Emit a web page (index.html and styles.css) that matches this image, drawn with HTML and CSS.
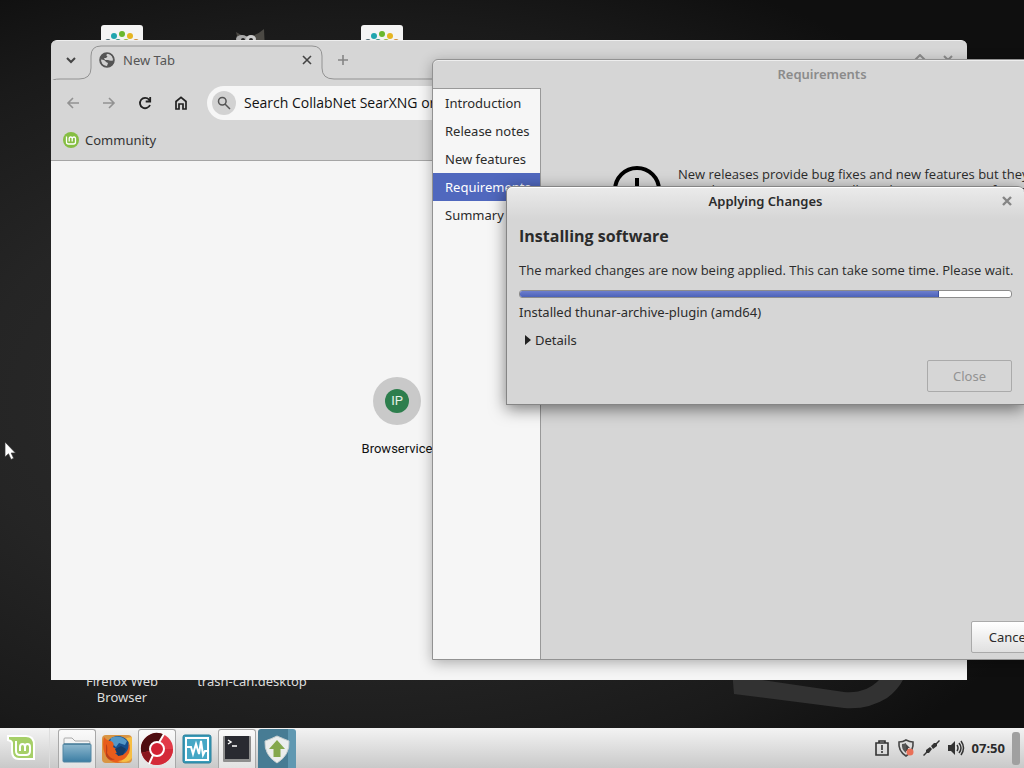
FILE: index.html
```html
<!DOCTYPE html>
<html lang="en">
<head>
    <meta charset="UTF-8">
    <meta name="viewport" content="width=device-width, initial-scale=1.0">
    <title>Desktop</title>
    <link rel="stylesheet" href="styles.css">
</head>
<body>
    <main class="desktop">
        <!-- Wallpaper logo -->
        <svg class="wallpaper-logo" width="176" height="50" viewBox="0 0 176 50">
            <path d="M0 0L2 24L112 38Q136 40 155 28Q166 20 172 8L176 0H150L148 9Q134 24 112 22L30 10V0Z" fill="#323232"/>
        </svg>

        <!-- Desktop icons -->
        <div class="desktop-icon icon-collab-1">
            <svg width="42" height="42" viewBox="0 0 42 42">
                <rect width="42" height="42" rx="3" fill="#f4f4f4"/>
                <circle cx="13" cy="11" r="3" fill="#20a5ae"/><circle cx="21" cy="9" r="3" fill="#69b82d"/><circle cx="29" cy="11" r="3" fill="#e5b522"/>
                <circle cx="7" cy="17" r="3" fill="#44616c"/><circle cx="17" cy="17" r="3" fill="#328c80"/><circle cx="25" cy="17" r="3" fill="#92b435"/><circle cx="35" cy="17" r="3" fill="#d28a35"/>
            </svg>
        </div>
        <div class="desktop-icon icon-gimp">
            <svg width="42" height="42" viewBox="0 0 42 42">
                <path d="M5 7L14 12Q24 12 33 4L34 26H3V15L7 15Z" fill="#4b4944"/>
                <ellipse cx="11" cy="14" rx="6" ry="4" fill="#a9a9a9"/><ellipse cx="20" cy="14" rx="5" ry="4" fill="#ccc"/>
                <circle cx="12" cy="15" r="2" fill="#222"/><circle cx="20" cy="15" r="2" fill="#222"/>
            </svg>
        </div>
        <div class="desktop-icon icon-collab-2">
            <svg width="42" height="42" viewBox="0 0 42 42">
                <rect width="42" height="42" rx="3" fill="#f4f4f4"/>
                <circle cx="13" cy="11" r="3" fill="#20a5ae"/><circle cx="21" cy="9" r="3" fill="#69b82d"/><circle cx="29" cy="11" r="3" fill="#e5b522"/>
                <circle cx="7" cy="17" r="3" fill="#44616c"/><circle cx="17" cy="17" r="3" fill="#328c80"/><circle cx="25" cy="17" r="3" fill="#92b435"/><circle cx="35" cy="17" r="3" fill="#d28a35"/>
            </svg>
        </div>
        <div class="desktop-icon icon-firefox">Firefox Web<br>Browser</div>
        <div class="desktop-icon icon-trash">trash-can.desktop</div>

        <!-- Browser window -->
        <section class="window browser">
            <div class="tab-strip">
                <svg class="tab-outline" width="916" height="40" viewBox="0 0 916 40" fill="none" stroke="#929292">
                    <path d="M0 42Q1 39 9 39H28Q40 39 40 28V16Q40 6 50 6H261Q271 6 271 16V28Q271 39 283 39H916"/>
                </svg>
                <button class="tab-search" aria-label="Search tabs">
                    <svg width="12" height="12" viewBox="0 0 12 12" fill="none" stroke="#444" stroke-width="2"><path d="M2 4L6 8L10 4"/></svg>
                </button>
                <div class="tab">
                    <svg width="16" height="16" viewBox="0 0 16 16">
                        <circle cx="8" cy="8" r="7" fill="#555"/>
                        <path d="M9 1.5Q6 3 8.500 4.500L7 6H5L6 8H9Q11 9 14 8.500Q14 3 9 1.500ZM2 7.500Q6 7.500 7 10L9 11L8 14Q2 14 2 7.500Z" fill="#d0d0d0"/>
                        <circle cx="8" cy="8" r="7" fill="none" stroke="#555" stroke-width="1.6"/>
                    </svg>
                    <span class="tab-title">New Tab</span>
                    <button aria-label="Close tab"><svg width="10" height="10" viewBox="0 0 10 10" stroke="#444" stroke-width="1.6"><path d="M1 1L9 9M9 1L1 9"/></svg></button>
                </div>
                <button class="new-tab" aria-label="New tab"><svg width="12" height="12" viewBox="0 0 12 12" stroke="#858585" stroke-width="1.6"><path d="M6 1V11M1 6H11"/></svg></button>
                <div class="window-controls">
                    <svg width="70" height="12" viewBox="0 0 70 12" fill="none" stroke="#8d8d8d" stroke-width="2"><path d="M0 6H10M28 6L33 1L38 6M57 2L65 10M65 2L57 10"/></svg>
                </div>
            </div>
            <div class="toolbar">
                <button aria-label="Back"><svg width="16" height="16" viewBox="0 0 16 16" fill="none" stroke="#929292" stroke-width="1.6"><path d="M14 8H3M8 3L3 8L8 13"/></svg></button>
                <button aria-label="Forward"><svg width="16" height="16" viewBox="0 0 16 16" fill="none" stroke="#929292" stroke-width="1.6"><path d="M2 8H13M8 3L13 8L8 13"/></svg></button>
                <button aria-label="Reload"><svg width="16" height="16" viewBox="0 0 16 16" fill="none" stroke="#222" stroke-width="1.8"><path d="M13 10A5.2 5.2 0 1 1 12 4.5L13 6M13.2 2V6.5H8.7"/></svg></button>
                <button aria-label="Home"><svg width="16" height="16" viewBox="0 0 16 16" fill="none" stroke="#222" stroke-width="1.7"><path d="M3 6.5L8 2.4L13 6.5V14H10V9H6V14H3Z"/></svg></button>
                <label class="omnibox">
                    <span class="search-badge"><svg width="14" height="14" viewBox="0 0 14 14" fill="none" stroke="#555" stroke-width="1.5"><circle cx="5.3" cy="5.3" r="3.8"/><path d="M8 8L13 13"/></svg></span>
                    <input type="text" aria-label="Address" placeholder="Search CollabNet SearXNG or type a URL">
                </label>
            </div>
            <div class="bookmarks">
                <svg width="16" height="16" viewBox="0 0 16 16">
                    <circle cx="8" cy="8" r="8" fill="#86be43"/>
                    <path d="M3.5 4.5V10Q3.5 12 5.5 12H10.5Q12.5 12 12.5 10V6.5Q12.5 5 11 5T9.2 6.5V9.5M9.2 9.5V6.5Q9.2 5 7.7 5T6.2 6.5V9.5" fill="none" stroke="#fff" stroke-width="1.3"/>
                </svg>
                <a href="#">Community</a>
            </div>
            <div class="page">
                <a class="shortcut" href="#">
                    <span class="shortcut-circle"><span class="shortcut-logo">IP</span></span>
                    <span>Browservice</span>
                </a>
            </div>
        </section>

        <!-- Upgrade assistant -->
        <section class="window upgrade">
            <h2 class="window-title">Requirements</h2>
            <div class="upgrade-body">
                <ul class="steps">
                    <li>Introduction</li>
                    <li>Release notes</li>
                    <li>New features</li>
                    <li class="active">Requirements</li>
                    <li>Summary</li>
                </ul>
                <div class="upgrade-content">
                    <div class="notice">
                        <svg width="48" height="48" viewBox="0 0 48 48"><circle cx="24" cy="24" r="22" fill="none" stroke="#000" stroke-width="4"/><path d="M24 12V28M24 32V36" stroke="#000" stroke-width="4"/></svg>
                        <p>New releases provide bug fixes and new features but they<br>introduce new issues. You will need some amount of time</p>
                    </div>
                    <div class="upgrade-actions"><button class="gtk-button cancel">Cancel</button></div>
                </div>
            </div>
        </section>

        <!-- Progress dialog -->
        <section class="window dialog">
            <header class="dialog-header">
                <h2 class="window-title">Applying Changes</h2>
                <button class="dialog-close" aria-label="Close window"><svg width="10" height="10" viewBox="0 0 10 10" stroke="#858585" stroke-width="2.4"><path d="M1 1L9 9M9 1L1 9"/></svg></button>
            </header>
            <div class="dialog-body">
                <h1>Installing software</h1>
                <p class="message">The marked changes are now being applied. This can take some time. Please wait.</p>
                <div class="progress"><div class="progress-value" style="width: 85.2%"></div></div>
                <p class="status">Installed thunar-archive-plugin (amd64)</p>
                <details><summary><svg width="6" height="10" viewBox="0 0 6 10"><path d="M0 0L6 5L0 10Z" fill="#222"/></svg>Details</summary></details>
                <div class="dialog-actions"><button class="gtk-button" disabled>Close</button></div>
            </div>
        </section>

        <svg class="cursor" width="12" height="20" viewBox="0 0 12 20"><path d="M1 1V16L4.5 12.8L7 18.5L9.7 17.3L7.2 12H11.5Z" fill="#fff" stroke="#333" stroke-width=".7"/></svg>
    </main>

    <footer class="panel">
        <button class="menu-button" aria-label="Menu">
            <svg width="30" height="28" viewBox="0 0 30 28">
                <path d="M2 2H20Q28 2 28 11V25H13Q6 25 6 17V9Q6 7 2 6Z" fill="#a6cf68" stroke="#fff" stroke-width="2"/>
                <path d="M10 7V17Q10 21 14 21H20Q24 21 24 17V13Q24 10 21.5 10T19 13V17M19 17V13Q19 10 16.5 10T14 13V17" fill="none" stroke="#fff" stroke-width="2"/>
            </svg>
        </button>
        <div class="tasks">
            <button class="task open" aria-label="Files">
                <svg width="32" height="32" viewBox="0 0 32 32">
                    <defs><linearGradient id="folder" x2="0" y2="1"><stop stop-color="#8fb9cf"/><stop offset="1" stop-color="#3b7da3"/></linearGradient></defs>
                    <path d="M3 6Q3 5 4 5H11L14 8H28Q29 8 29 10V14H3Z" fill="#f5f5f5" stroke="#aaa"/>
                    <rect x="2" y="11" width="28" height="18" rx="1" fill="url(#folder)" stroke="#5386a2"/>
                    <path d="M3 11H29" stroke="#366e8d"/>
                </svg>
            </button>
            <button class="task" aria-label="Firefox">
                <svg width="32" height="32" viewBox="0 0 32 32">
                    <rect x="1" y="2" width="30" height="28" rx="4" fill="#d99543"/>
                    <circle cx="17" cy="15" r="12" fill="#164e8d"/>
                    <path d="M10 5Q19 1 26 8L24 12L18 10L15 14L9 9Z" fill="#5598c7"/>
                    <path d="M3 4Q6 8 10 8Q14 10 12 14L17 17Q19 20 14 20Q17 24 23 21Q29 17 27 9Q34 20 26 27Q16 33 7 26Q0 17 3 4Z" fill="#e85c1b"/>
                    <path d="M25 5Q31 12 28 20Q23 29 16 28Q27 31 31 25V4Z" fill="#f6be43"/>
                    <path d="M5 11Q7 13 6 20Q9 26 14 26Q9 29 5 23Z" fill="#b9401b"/>
                    <path d="M14 16L20 13L25 16L22 22L17 23" fill="#153b66"/>
                </svg>
            </button>
            <button class="task open" aria-label="Chromium">
                <svg width="34" height="34" viewBox="0 0 34 34">
                    <circle cx="17" cy="17" r="16" fill="#e23b48"/>
                    <path d="M24 2.600A16 16 0 0 0 1.500 21L17 17Z" fill="#4e0d10"/>
                    <path d="M1.500 21A16 16 0 0 0 10 31.400L17 17Z" fill="#8a161d"/>
                    <path d="M10 31.400A16 16 0 0 0 33 17H17Z" fill="#d42a38"/>
                    <path d="M24 2L17 14M14 21L9 32" stroke="#fff" stroke-width="2"/>
                    <circle cx="17" cy="17" r="7" fill="#d32334" stroke="#fff" stroke-width="2"/>
                </svg>
            </button>
            <button class="task" aria-label="System monitor">
                <svg width="32" height="32" viewBox="0 0 32 32">
                    <rect x="2" y="2" width="28" height="28" rx="2" fill="#399bb9" stroke="#297e9a"/>
                    <rect x="5" y="5" width="22" height="22" fill="#45a7c5" stroke="#fff" stroke-width="2"/>
                    <path d="M6 14H10L12 21L15 11L18 21L20 8L22 22L24 18H27" fill="none" stroke="#fff" stroke-width="2"/>
                </svg>
            </button>
            <button class="task open" aria-label="Terminal">
                <svg width="32" height="32" viewBox="0 0 32 32">
                    <rect x="2" y="3" width="28" height="26" rx="1" fill="#8e8e8e"/>
                    <rect x="4" y="3" width="24" height="23" fill="#292a31"/>
                    <path d="M7 7L10 9L7 11M11 13H16" fill="none" stroke="#fff" stroke-width="1.5"/>
                </svg>
            </button>
            <button class="task current" aria-label="Update manager">
                <svg width="32" height="32" viewBox="0 0 32 32">
                    <path d="M16 3Q23 6 28 8Q29 22 16 30Q3 22 4 8Q10 6 16 3Z" fill="#eceeed" stroke="#c6cecf"/>
                    <path d="M16 7L24 16H19.5V24H12.5V16H8Z" fill="#85a84d"/>
                </svg>
            </button>
        </div>
        <div class="tray">
            <svg width="16" height="18" viewBox="0 0 16 18" fill="none" stroke="#333" stroke-width="1.600"><path d="M2 4H14V16H2ZM5 2H11V4H5ZM8 6V11M8 12V14"/></svg>
            <svg width="18" height="18" viewBox="0 0 18 18">
                <path d="M9 1Q13 3 16 3Q17 12 9 17Q1 12 2 3Q6 3 9 1Z" fill="#ddd" stroke="#444" stroke-width="1.6"/>
                <path d="M9 4V14Q4 10 5 5Q7 5 9 4Z" fill="#555"/>
                <path d="M9 5L13 9H11V12H9Z" fill="#444"/>
                <circle cx="13" cy="13" r="3.5" fill="#e97058"/>
            </svg>
            <svg width="18" height="18" viewBox="0 0 18 18"><path d="M1 16L4 13L4 11L8 8L10 10L7 14L5 14L2 17ZM9 7L12 4L14 4L17 1L18 2L15 5L15 7L11 10Z" fill="#333"/></svg>
            <svg width="18" height="18" viewBox="0 0 18 18"><path d="M1 6H4L8 2V16L4 12H1Z" fill="#333"/><path d="M10 6Q12 9 10 12M12 4Q16 9 12 14M14 2Q19 9 14 16" fill="none" stroke="#333" stroke-width="1.5"/></svg>
            <time class="clock">07:50</time>
            <button class="show-desktop" aria-label="Show desktop"></button>
        </div>
    </footer>
</body>
</html>
```
FILE: styles.css
```css
* {
    box-sizing: border-box;
}
body {
    margin: 0;
    height: 100vh;
    display: flex;
    flex-direction: column;
    overflow: hidden;
    background: #161616;
    color: #2b2b2b;
    font: 13px/16px "Noto Sans", "Open Sans", sans-serif;
}
h1, h2, p, ul {
    margin: 0;
    padding: 0;
}
svg {
    display: block;
    flex: none;
}
button {
    font: inherit;
    color: inherit;
    padding: 0;
    border: none;
    background: none;
}
a {
    color: inherit;
    text-decoration: none;
}
.desktop {
    position: relative;
    flex: 1;
    overflow: hidden;
    background: radial-gradient(ellipse 75% 65% at 35% 55%, #2e2e2e 0%, #252525 50%, #1a1a1a 80%, #0f0f0f 100%);
}
.wallpaper-logo {
    position: absolute;
    left: 732px;
    top: 670px;
}
.desktop-icon {
    position: absolute;
    width: 120px;
    display: flex;
    flex-direction: column;
    align-items: center;
    text-align: center;
    color: #ddd;
}
.icon-collab-1 {
    left: 62px;
    top: 25px;
}
.icon-gimp {
    left: 192px;
    top: 25px;
}
.icon-collab-2 {
    left: 322px;
    top: 25px;
}
.icon-firefox {
    display: block;
    left: 62px;
    top: 673px;
}
.icon-trash {
    left: 192px;
    top: 673px;
}

/* Windows */
.window {
    position: absolute;
    display: flex;
    flex-direction: column;
    background: #d6d6d6;
}
.window-title {
    font-size: 13px;
    line-height: 28px;
    font-weight: 600;
    text-align: center;
}
.browser {
    left: 51px;
    top: 40px;
    width: 916px;
    height: 640px;
    border-radius: 6px 6px 0 0;
    overflow: hidden;
    border-top: 1px solid #eee;
    color: #333;
}
.tab-strip {
    position: relative;
    display: flex;
    align-items: center;
    height: 39px;
    padding-bottom: 1px;
}
.tab-outline {
    position: absolute;
    left: 0;
    top: -1px;
}
.tab-search {
    width: 40px;
    display: flex;
    justify-content: center;
}
.tab {
    width: 231px;
    padding: 0 10px 0 8px;
    display: flex;
    align-items: center;
    gap: 8px;
    color: #555;
}
.tab-title {
    flex: 1;
}
.new-tab {
    margin-left: 15px;
}
.window-controls {
    margin-left: auto;
    padding-right: 10px;
}
.toolbar {
    display: flex;
    align-items: center;
    gap: 20px;
    height: 46px;
    padding: 0 14px;
}
.omnibox {
    flex: 1;
    display: flex;
    align-items: center;
    gap: 8px;
    height: 34px;
    margin-left: -2px;
    padding: 0 5px;
    border-radius: 17px;
    background: #f6f6f6;
}
.search-badge {
    width: 24px;
    height: 24px;
    display: flex;
    align-items: center;
    justify-content: center;
    border-radius: 50%;
    background: #d2d2d2;
}
.omnibox input {
    flex: 1;
    padding: 0;
    border: none;
    outline: none;
    background: none;
    font: 14px/20px "Open Sans", sans-serif;
}
.omnibox input::placeholder {
    color: #111;
    opacity: 1;
}
.bookmarks {
    display: flex;
    align-items: center;
    gap: 6px;
    height: 35px;
    padding: 0 12px 6px;
    border-bottom: 1px solid #a5a5a5;
}
.page {
    flex: 1;
    display: flex;
    justify-content: center;
    align-items: flex-start;
    padding: 216px 224px 0 0;
    background: #f5f5f5;
}
.shortcut {
    display: flex;
    flex-direction: column;
    align-items: center;
    gap: 16px;
    color: #111;
    font-family: Roboto, sans-serif;
}
.shortcut-circle {
    width: 48px;
    height: 48px;
    display: flex;
    align-items: center;
    justify-content: center;
    border-radius: 50%;
    background: #c9c9c9;
}
.shortcut-logo {
    width: 24px;
    height: 24px;
    border-radius: 50%;
    background: #2d7e4d;
    color: #e5f2e8;
    line-height: 24px;
    text-align: center;
}

/* Upgrade window */
.upgrade {
    left: 432px;
    top: 59px;
    width: 780px;
    height: 601px;
    border: 1px solid #929292;
    border-radius: 6px 6px 0 0;
    box-shadow: 0 3px 14px rgba(0, 0, 0, .3), inset 0 1px #eee;
}
.upgrade .window-title {
    color: #8b8b8b;
}
.upgrade-body {
    flex: 1;
    display: flex;
}
.steps {
    width: 108px;
    list-style: none;
    line-height: 28px;
    background: #f6f6f6;
    border: 1px solid #999;
    border-width: 1px 1px 0 0;
}
.steps li {
    padding-left: 12px;
}
.steps .active {
    background: #5068be;
    color: #fff;
}
.upgrade-content {
    flex: 1;
    display: flex;
    flex-direction: column;
    justify-content: space-between;
    padding: 78px 72px 6px;
}
.notice {
    display: flex;
    gap: 17px;
    white-space: nowrap;
    font-family: "Open Sans", sans-serif;
}
.upgrade-actions {
    display: flex;
    justify-content: flex-end;
    padding-right: 92px;
}
.gtk-button {
    width: 85px;
    height: 32px;
    border: 1px solid #aaa;
    border-radius: 2px;
}
.gtk-button:disabled {
    color: #929292;
}
.cancel {
    width: 76px;
    background: linear-gradient(#fff, #e0e0e0);
}

/* Progress dialog */
.dialog {
    left: 506px;
    top: 186px;
    width: 518px;
    border: 1px solid #858585;
    border-right: none;
    border-radius: 6px 6px 0 0;
    box-shadow: 0 4px 16px rgba(0, 0, 0, .5), inset 0 1px #fff;
    background: linear-gradient(#ebebeb, #d6d6d6 32px);
}
.dialog-header {
    position: relative;
}
.dialog-close {
    position: absolute;
    right: 12px;
    top: 9px;
}
.dialog-body {
    padding: 11px 12px 12px;
    display: flex;
    flex-direction: column;
}
.dialog h1 {
    font: bold 16px/20px "Open Sans", sans-serif;
    margin-bottom: 16px;
}
.dialog p {
    white-space: nowrap;
}
.message {
    font-family: "Open Sans", sans-serif;
}
.progress {
    height: 8px;
    margin: 12px 0 6px;
    border: 1px solid #8c8c8c;
    border-radius: 3px;
    background: #fff;
    overflow: hidden;
}
.progress-value {
    height: 100%;
    background: linear-gradient(#6d7ecd, #4c62b9);
    box-shadow: 0 0 0 1px #3c4f9d;
}
.status {
    margin-bottom: 12px;
}
.dialog summary {
    display: flex;
    align-items: center;
    gap: 4px;
    padding-left: 6px;
    list-style: none;
}
.dialog-actions {
    display: flex;
    justify-content: flex-end;
    margin-top: 12px;
}
.cursor {
    position: absolute;
    left: 4px;
    top: 441px;
}

/* Panel */
.panel {
    flex: none;
    display: flex;
    align-items: stretch;
    justify-content: space-between;
    height: 40px;
    background: linear-gradient(#f3f3f3, #c9c9c9);
}
.menu-button {
    width: 50px;
    padding-left: 6px;
    border-right: 1px solid #ddd;
}
.tasks {
    flex: 1;
    display: flex;
    gap: 2px;
    padding: 1px 0 0 8px;
}
.task {
    width: 38px;
    display: flex;
    align-items: center;
    justify-content: center;
    border-radius: 3px 3px 0 0;
}
.task.open {
    border: 1px solid #a8a8a8;
    border-bottom: none;
    background: linear-gradient(#fafafa, #e2e2e2);
}
.task.current {
    background: linear-gradient(90deg, #477c94 78%, #6098b1 78%);
}
.tray {
    display: flex;
    align-items: center;
    gap: 7px;
    padding-right: 4px;
}
.clock {
    font: bold 13px/16px "Noto Sans", sans-serif;
}
.show-desktop {
    width: 8px;
    height: 33px;
    border-radius: 3px;
    background: #a0a0a0;
}
```
